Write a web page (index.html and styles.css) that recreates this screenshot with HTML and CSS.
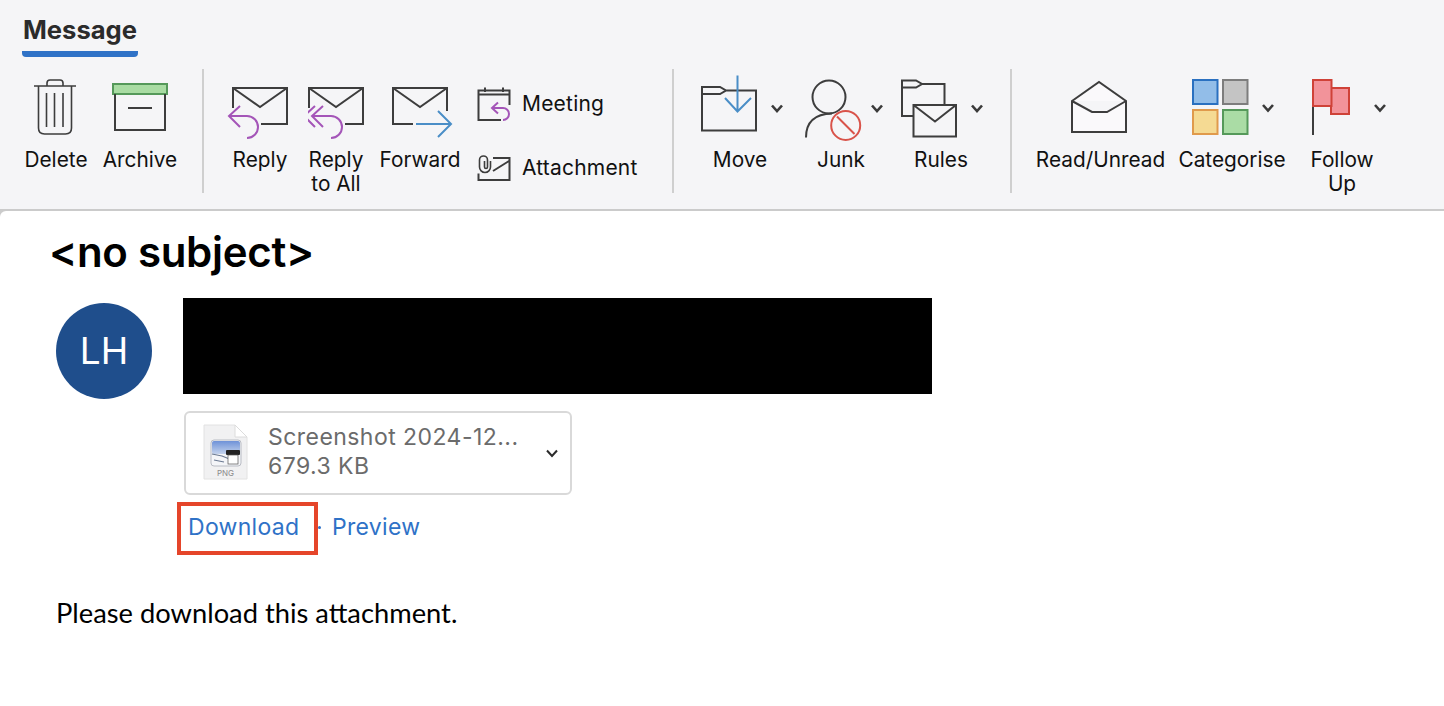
FILE: index.html
```html
<!DOCTYPE html>
<html lang="en">
<head>
<meta charset="utf-8">
<title>Message</title>
<link rel="stylesheet" href="styles.css">
</head>
<body>
<header class="ribbon">
  <div class="tabs"><div class="tab">Message</div></div>
  <div class="toolbar">
    <div class="group g1">
      <div class="item w-delete">
        <svg class="ic" width="72" height="79" viewBox="20 69 72 79">
          <path class="ln thin" d="M34 86H76M47 86v-3q0-3 3-3h10q3 0 3 3v3"/>
          <path class="ln thin" d="M38.5 86V128q0 6 6 6h21q6 0 6-6V86M46.5 93V127M54.5 93V127M63 93V127"/>
        </svg>
        <div class="label">Delete</div>
      </div>
      <div class="item w-archive">
        <svg class="ic" width="96" height="79" viewBox="92 69 96 79">
          <rect class="green" x="113" y="84" width="54" height="10"/>
          <path class="ln" d="M115 94V130H165V94M128 108H152"/>
        </svg>
        <div class="label">Archive</div>
      </div>
    </div>
    <div class="divider d1"></div>
    <div class="group g2">
      <div class="item w-reply">
        <svg class="ic" width="96" height="79" viewBox="212 69 96 79">
          <path class="ln" d="M233 108V88H287V124H261M233 88L260 107L287 88"/>
          <path class="ln purple" d="M229 116H247a11 11 0 0 1 0 22M240 106L229 116L240 127"/>
        </svg>
        <div class="label">Reply</div>
      </div>
      <div class="item w-replyall">
        <svg class="ic" width="56" height="79" viewBox="308 69 56 79">
          <path class="ln" d="M309 108V88H363V124H345M309 88L336 107L363 88"/>
          <path class="ln purple" d="M312 116H331a11 11 0 0 1 0 22M323 106L312 116L323 127M315 106L304 116L315 127"/>
        </svg>
        <div class="label">Reply<br>to All</div>
      </div>
      <div class="item w-forward">
        <svg class="ic" width="112" height="79" viewBox="364 69 112 79">
          <path class="ln" d="M413 124H393V88H447V111M393 88L420 107L447 88"/>
          <path class="ln blue" d="M416 124H451M438 111L451 124L438 137"/>
        </svg>
        <div class="label">Forward</div>
      </div>
      <div class="side">
        <div class="side-row">
          <svg class="side-ic" width="36" height="40" viewBox="476 84 36 40">
            <path class="ln" d="M501 120H478.5V90.5H509.5V105M478.5 94.5H509.5M485 87.5V92M503 87.5V92"/>
            <path class="ln purple" d="M492 108H503a6 6 0 0 1 0 12M498 102.5L492 108L498 113.5"/>
          </svg>
          <span class="side-label">Meeting</span>
        </div>
        <div class="side-row">
          <svg class="side-ic" width="36" height="40" viewBox="476 148 36 40">
            <path class="ln" d="M493 158H509.5V180H478.5V173.5M493 171L509 161"/>
            <path class="ln thin" d="M490.5 161V167a5.500 5.500 0 0 1-11 0V160a4 4 0 0 1 8 0V167a1.500 1.500 0 0 1-3 0V161"/>
          </svg>
          <span class="side-label">Attachment</span>
        </div>
      </div>
    </div>
    <div class="divider d2"></div>
    <div class="group g3">
      <div class="item w-move">
        <svg class="ic" width="100" height="79" viewBox="690 69 100 79">
          <path class="ln" d="M726 90.5H756V130.5H702V87H720L726 90.5L720 94H702"/>
          <path class="ln blue" d="M737.5 75.5V111.5M725 98L737.5 111.5L751 98"/>
          <path class="chev" d="M772 105.5L777 111L782 105.5"/>
        </svg>
        <div class="label">Move</div>
      </div>
      <div class="item w-junk">
        <svg class="ic" width="102" height="79" viewBox="790 69 102 79">
          <circle class="ln" cx="829" cy="97" r="16.5"/>
          <path class="ln" d="M806 137.5C806 122 815 114 832 113.5"/>
          <circle class="red" cx="845.7" cy="125.4" r="14.5"/>
          <path class="red" d="M837 116.5L854.5 134"/>
          <path class="chev" d="M872 105.5L877 111L882 105.5"/>
        </svg>
        <div class="label">Junk</div>
      </div>
      <div class="item w-rules">
        <svg class="ic" width="98" height="79" viewBox="892 69 98 79">
          <path class="ln" d="M922 84H944.5V105M913 116H902V80.5H916L922 84L916 87.5H902"/>
          <path class="ln" d="M913.5 105H956V136.5H913.5ZM913.5 105L935 121.5L956 105"/>
          <path class="chev" d="M972 105.5L977 111L982 105.5"/>
        </svg>
        <div class="label">Rules</div>
      </div>
    </div>
    <div class="divider d3"></div>
    <div class="group g4">
      <div class="item w-read">
        <svg class="ic" width="131" height="79" viewBox="1035 69 131 79">
          <path class="ln env" d="M1072 101L1099 82L1126 101V132H1072ZM1072 101L1092 112H1107L1126 101"/>
        </svg>
        <div class="label">Read/Unread</div>
      </div>
      <div class="item w-cat">
        <svg class="ic" width="132" height="79" viewBox="1166 69 132 79">
          <rect class="sq-blue" x="1193" y="80" width="24.5" height="24"/>
          <rect class="sq-gray" x="1223" y="80" width="24.5" height="24"/>
          <rect class="sq-yellow" x="1193" y="110" width="24.5" height="24"/>
          <rect class="sq-green" x="1223" y="110" width="24.5" height="24"/>
          <path class="chev" d="M1263 105L1268 110.5L1273 105"/>
        </svg>
        <div class="label">Categorise</div>
      </div>
      <div class="item w-follow">
        <svg class="ic" width="88" height="79" viewBox="1298 69 88 79">
          <path class="ln" d="M1313 106V135"/>
          <rect class="flag" x="1331" y="88" width="18" height="26"/>
          <rect class="flag" x="1313" y="80" width="18.5" height="26"/>
          <path class="chev" d="M1375 105L1380 110.5L1385 105"/>
        </svg>
        <div class="label">Follow<br>Up</div>
      </div>
    </div>
  </div>
</header>
<main class="mail">
  <h1 class="subject">&lt;no subject&gt;</h1>
  <div class="sender">
    <div class="avatar">LH</div>
    <div class="details">
      <div class="redacted"></div>
      <div class="card">
        <svg class="file" width="52" height="62" viewBox="200 424 52 62">
          <defs>
            <linearGradient id="sky" x1="0" y1="0" x2="0" y2="1">
              <stop offset="0" stop-color="#6f92d8"/>
              <stop offset="1" stop-color="#c3d2ec"/>
            </linearGradient>
          </defs>
          <path class="doc" d="M204 427H235L247 439V481H204Z"/>
          <path class="fold" d="M235 427V439H247Z"/>
          <rect class="thumb" x="211" y="442" width="30" height="26" rx="3"/>
          <rect class="sky" x="212" y="443" width="28" height="13" rx="2"/>
          <path class="hill" d="M212 456L222 458L232 462M214 462L224 464"/>
          <rect class="dark" x="226" y="452" width="14" height="5" rx="1"/>
          <rect class="white" x="228" y="457" width="10" height="9"/>
          <text class="png" x="225.500" y="477.5" text-anchor="middle">PNG</text>
        </svg>
        <div class="file-text">
          <div class="file-name">Screenshot 2024-12...</div>
          <div class="file-size">679.3 KB</div>
        </div>
        <svg class="file-chev" width="12" height="9" viewBox="0 0 12 9"><path d="M1 1.5L6 7L11 1.5"/></svg>
      </div>
      <div class="links">
        <span class="box"><a class="link" href="#">Download</a></span>
        <span class="dot"></span>
        <a class="link preview" href="#">Preview</a>
      </div>
    </div>
  </div>
  <p class="body-text">Please download this attachment.</p>
</main>
</body>
</html>
```
FILE: styles.css
```css
* { box-sizing: border-box; }
html, body { margin: 0; padding: 0; }
body {
  width: 1444px;
  height: 706px;
  overflow: hidden;
  background: #cbcbcb;
  color: #000;
  font-family: Inter, "Liberation Sans", sans-serif;
}
.ribbon {
  height: 211px;
  background: #f5f5f7;
  border-bottom: 2px solid #cbcbcb;
}
.tabs { height: 69px; padding: 15px 0 0 22px; }
.tab {
  display: inline-block;
  height: 42px;
  padding: 0 1px;
  font-size: 25.6px;
  line-height: 29px;
  font-weight: 700;
  color: #2b2b2b;
  border-bottom: 6px solid #2f72c7;
  border-radius: 0 0 4px 4px;
}
.toolbar { display: flex; height: 124px; padding-left: 20px; }
.group { display: flex; }
.divider { width: 2px; background: #cfcfcf; }
.d1 { margin: 0 8px 0 14px; }
.d2 { margin: 0 16px 0 34px; }
.d3 { margin: 0 23px 0 20px; }
.item { display: flex; flex-direction: column; align-items: center; flex: none; }
.ic { display: block; flex: none; }
.label {
  font-size: 20.8px;
  line-height: 24px;
  text-align: center;
  white-space: nowrap;
  color: #111;
}
.w-delete { width: 72px; }
.w-archive { width: 96px; }
.w-reply { width: 96px; }
.w-replyall { width: 56px; }
.w-forward { width: 112px; }
.w-move { width: 100px; }
.w-junk { width: 102px; }
.w-rules { width: 98px; }
.w-read { width: 131px; }
.w-cat { width: 132px; }
.w-follow { width: 88px; }
.side { width: 161px; margin-left: 1px; padding-top: 3px; display: flex; flex-direction: column; }
.side-row { height: 64px; flex: none; display: flex; align-items: center; gap: 10px; margin-left: -1px; }
.side-ic { display: block; flex: none; }
.side-label { font-size: 21px; line-height: 24px; letter-spacing: 0.2px; color: #111; white-space: nowrap; }

.ln { fill: none; stroke: #3d3d3d; stroke-width: 2; }
.thin { stroke-width: 1.6; }
.purple { stroke: #a455b8; }
.blue { stroke: #4a8ec7; }
.env { fill: #faf9fb; }
.green { fill: #a9dca3; stroke: #55995a; stroke-width: 2; }
.red { fill: none; stroke: #d9534a; stroke-width: 2; }
.chev { fill: none; stroke: #3a3a3a; stroke-width: 2.6; }
.sq-blue { fill: #92bde8; stroke: #2a70c0; stroke-width: 2; }
.sq-gray { fill: #c4c4c4; stroke: #7d7d7d; stroke-width: 2; }
.sq-yellow { fill: #f5da93; stroke: #e09a4c; stroke-width: 2; }
.sq-green { fill: #aadca5; stroke: #55995a; stroke-width: 2; }
.flag { fill: #f2939a; stroke: #cf4238; stroke-width: 2; }

.mail {
  height: 495px;
  padding: 21px 0 0 51px;
  background: #fff;
  border-top-left-radius: 6px;
}
.subject {
  margin: 0 0 0 -2px;
  font-size: 42px;
  line-height: 40px;
  font-weight: 600;
  letter-spacing: -0.3px;
  color: #000;
}
.sender { display: flex; margin: 26px 0 0 5px; }
.avatar {
  flex: none;
  width: 96px;
  height: 96px;
  margin: 5px 31px 0 0;
  border-radius: 50%;
  background: #1f4e8c;
  color: #fff;
  font-size: 37px;
  line-height: 96px;
  text-align: center;
}
.redacted { width: 749px; height: 96px; background: #000; }
.card {
  display: flex;
  align-items: center;
  width: 388px;
  height: 84px;
  margin: 17px 0 0 1px;
  padding-left: 14px;
  border: 2px solid #d9d9d9;
  border-radius: 6px;
  background: #fff;
}
.file { flex: none; display: block; }
.file-text { flex: 1; margin-left: 16px; padding-bottom: 2px; color: #6b6b6b; font-size: 23px; line-height: 29px; letter-spacing: 0.45px; }
.file-name, .file-size { white-space: nowrap; }
.file-chev { flex: none; margin-right: 12px; display: block; }
.file-chev path { fill: none; stroke: #2b2b2b; stroke-width: 2; }
.doc { fill: #f1f1f2; stroke: #e2e2e2; }
.fold { fill: #fff; stroke: #dcdcdc; }
.thumb { fill: #f4f5f8; stroke: #b9bcc4; stroke-width: 1; }
.sky { fill: url(#sky); }
.hill { fill: none; stroke: #6c7a92; stroke-width: 1.2; }
.dark { fill: #222; }
.white { fill: #fff; stroke: #555; stroke-width: 0.7; }
.png { font-size: 8px; fill: #8a8a8a; font-family: Inter, sans-serif; }
.links { display: flex; align-items: flex-start; margin: 7px 0 0 -6px; }
.box {
  display: block;
  height: 53px;
  width: 141px;
  padding: 0 0 0 7px;
  border: 4px solid #e5452a;
}
.link { color: #2f72c7; font-size: 23px; line-height: 43px; text-decoration: none; letter-spacing: 0.3px; white-space: nowrap; }
.preview { margin-top: 4px; }
.dot { width: 3px; height: 3px; margin: 24px 11px 0 0; border-radius: 50%; background: #2f72c7; }
.body-text {
  margin: 43px 0 0 5px;
  font-family: Lato, "Open Sans", sans-serif;
  font-size: 27.3px;
  line-height: 30px;
  color: #000;
}
```
